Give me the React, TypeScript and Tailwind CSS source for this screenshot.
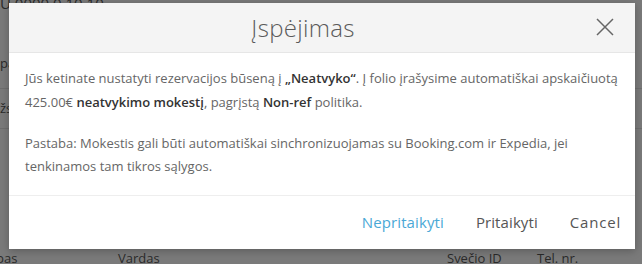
import React from "react";

export default function App() {
  return (
    <div
      className="relative w-[642px] h-[264px] overflow-hidden bg-[#7a7a7a]"
      style={{ fontFamily: '"Open Sans", "Noto Sans", sans-serif' }}
    >
      {/* background page (dimmed) */}
      <div className="absolute inset-0 text-[#2a2a2a] text-[13px]">
        <div className="absolute left-[0px] top-[-8px] text-[15px]">U 0000 0 10 10</div>
        <div className="absolute left-[0px] top-[54px]">pa</div>
        <div className="absolute left-0 right-0 top-[88px] border-t border-[#6e6e6e]" />
        <div className="absolute left-[0px] top-[99px]">žs</div>
        <div className="absolute left-0 right-0 top-[128px] border-t border-[#6e6e6e]" />
        <div className="absolute left-0 right-0 top-[249px] flex text-[13px]">
          <span className="ml-[-4px] w-[122px]">pas</span>
          <span className="w-[329px]">Vardas</span>
          <span className="w-[90px]">Svečio ID</span>
          <span>Tel. nr.</span>
        </div>
      </div>

      {/* modal */}
      <div className="absolute left-[9px] top-[3px] w-[626px] h-[246px] bg-white flex flex-col shadow-[0_2px_8px_rgba(0,0,0,0.25)]">
        <div className="relative h-[50px] bg-[#f4f4f4] border-b border-[#e6e6e6] flex items-center justify-center pr-[38px]">
          <span className="text-[24px] text-[#5a5a5a] font-light tracking-[0.3px]">Įspėjimas</span>
          <button className="absolute right-[20px] top-[14px] w-[20px] h-[20px] flex items-center justify-center">
            <svg width="18" height="18" viewBox="0 0 18 18">
              <path d="M1 1 L17 17 M17 1 L1 17" stroke="#666" strokeWidth="1.5" fill="none" />
            </svg>
          </button>
        </div>
        <div className="flex-1 px-[16px] pt-[13px] text-[13px] leading-[24px] text-[#666]">
          <p>
            Jūs ketinate nustatyti rezervacijos būseną į{" "}
            <b className="font-semibold text-[#333]">„Neatvyko“</b>. Į folio įrašysime automatiškai apskaičiuotą
            425.00€ <b className="font-semibold text-[#333]">neatvykimo mokestį</b>, pagrįstą{" "}
            <b className="font-semibold text-[#333]">Non-ref</b> politika.
          </p>
          <p className="mt-[18px] leading-[23px]">
            Pastaba: Mokestis gali būti automatiškai sinchronizuojamas su Booking.com ir Expedia, jei tenkinamos tam
            tikros sąlygos.
          </p>
        </div>
        <div className="h-[54px] border-t border-[#eeeeee] flex items-center justify-end pr-[14px] text-[15px]">
          <button className="text-[#4aa8d6] mr-[32px] tracking-[0.1px]">Nepritaikyti</button>
          <button className="text-[#555] mr-[32px] tracking-[0.1px]">Pritaikyti</button>
          <button className="text-[#555] tracking-[0.8px]">Cancel</button>
        </div>
      </div>
    </div>
  );
}
